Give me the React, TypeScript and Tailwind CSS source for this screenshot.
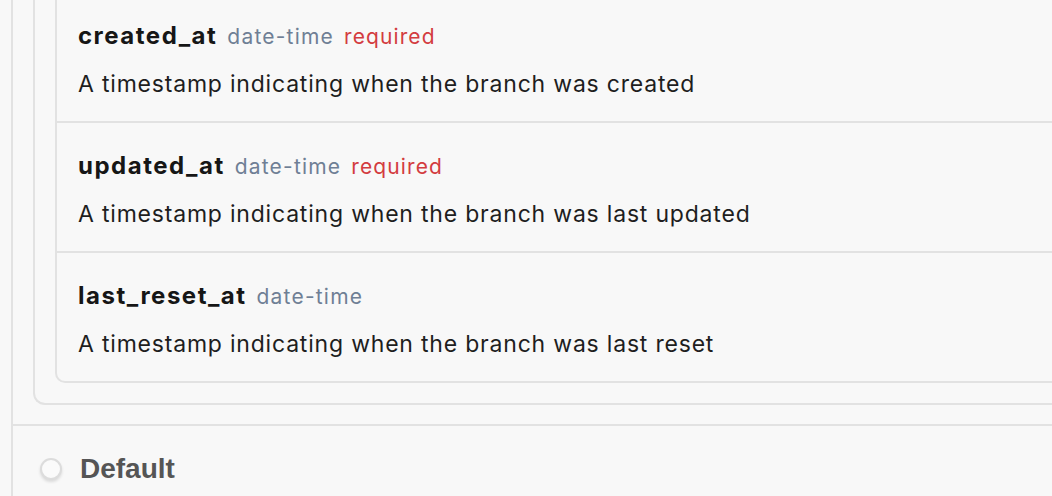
import React from "react";

const rows = [
  { name: "created_at", type: "date-time", required: true, desc: "A timestamp indicating when the branch was created" },
  { name: "updated_at", type: "date-time", required: true, desc: "A timestamp indicating when the branch was last updated" },
  { name: "last_reset_at", type: "date-time", required: false, desc: "A timestamp indicating when the branch was last reset" },
];

export default function App() {
  return (
    <div className="w-[1052px] h-[496px] overflow-hidden bg-[#f8f8f8]" style={{ fontFamily: 'Inter, sans-serif' }}>
      <div className="ml-[11px] w-[1200px] border-l-2 border-[#e2e2e2]">
        <div className="pl-[20px] pb-[19px]">
          <div className="border-l-2 border-b-2 border-[#e2e2e2] rounded-bl-[12px] pl-[20px] pb-[20px]">
            <div className="border-l-2 border-b-2 border-[#e2e2e2] rounded-bl-[10px]">
              {rows.map((r, i) => (
                <div
                  key={r.name}
                  className={`pl-[21px] pb-[21px] ${i === 0 ? "pt-[20px]" : "pt-[27px] border-t-2 border-[#e2e2e2]"}`}
                >
                  <div className="flex items-baseline gap-[10px] h-[32px]">
                    <span className="text-[24px] font-bold tracking-[1.5px] text-[#161616] leading-[32px]">{r.name}</span>
                    <span className="text-[21px] tracking-[1.2px] text-[#6f7f95] leading-[32px]">{r.type}</span>
                    {r.required && <span className="text-[21px] tracking-[1.1px] text-[#d33c40] leading-[32px]">required</span>}
                  </div>
                  <div className="mt-[16px] text-[23px] tracking-[0.8px] text-[#1e1e1e] leading-[32px]">{r.desc}</div>
                </div>
              ))}
            </div>
          </div>
        </div>
        <div className="border-t-2 border-[#e2e2e2] flex items-center h-[88px] pl-[27px]">
          <span className="w-[22px] h-[22px] rounded-full border-2 border-[#dcdcdc] bg-[#fafafa] shadow-[0_2px_3px_rgba(0,0,0,0.12)]" />
          <span className="ml-[18px] text-[28px] font-bold text-[#555555]" style={{ fontFamily: '"Liberation Sans", Arial, sans-serif' }}>
            Default
          </span>
        </div>
      </div>
    </div>
  );
}
